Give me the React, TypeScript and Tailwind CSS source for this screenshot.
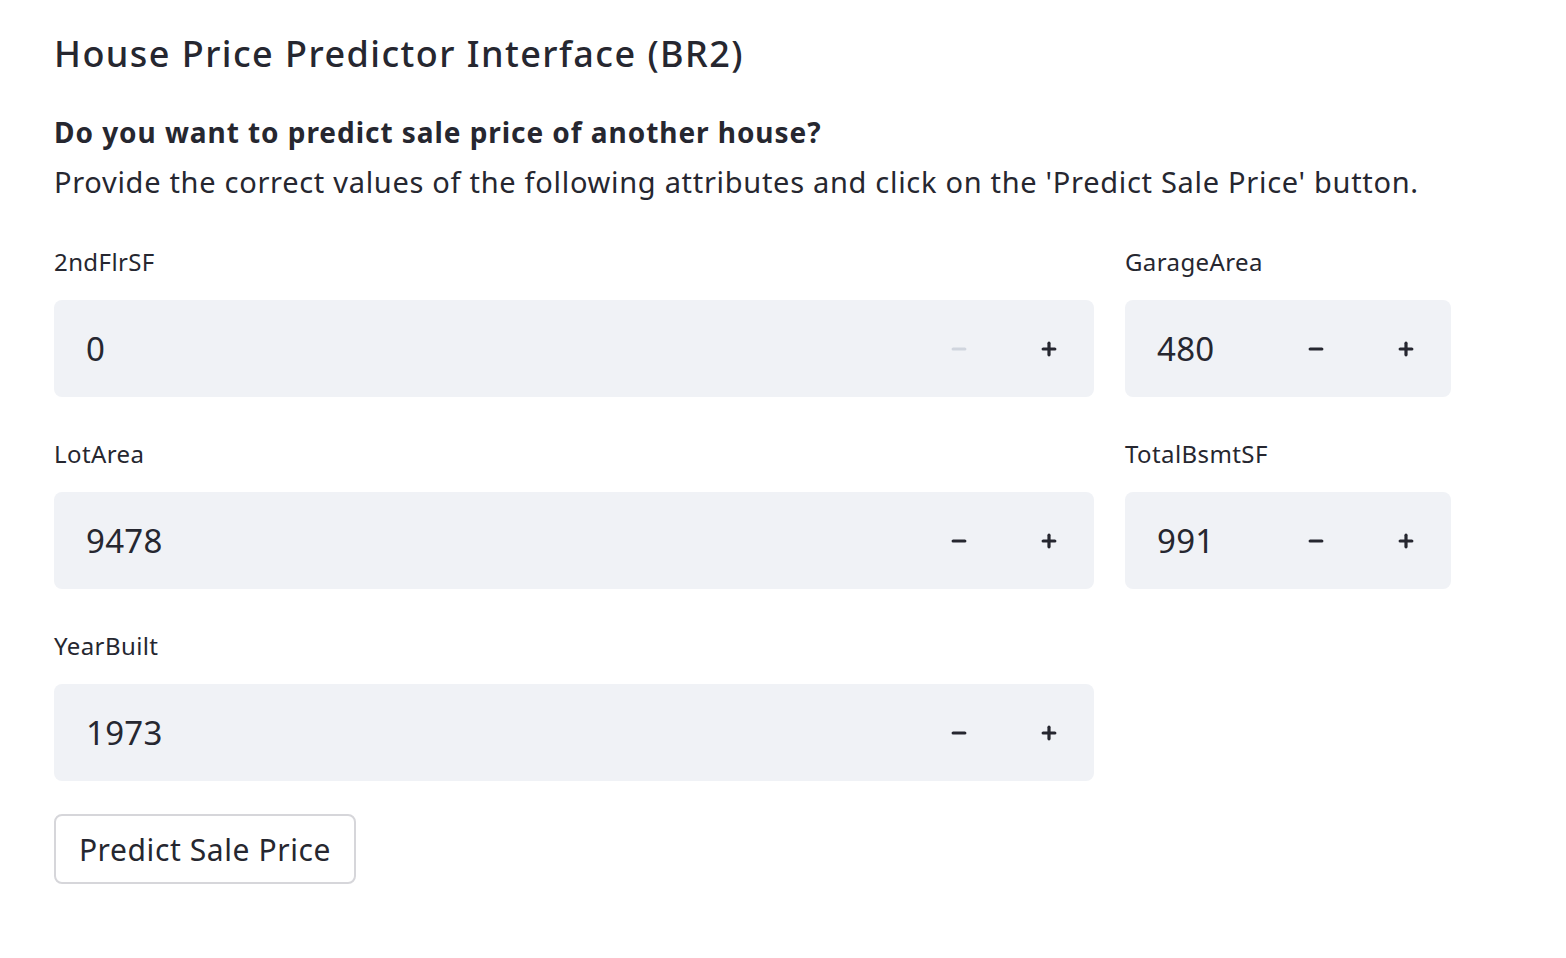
import { Minus, Plus } from "lucide-react";

type Field = { label: string; value: string; minDisabled?: boolean };

const fields: Field[] = [
  { label: "2ndFlrSF", value: "0", minDisabled: true },
  { label: "GarageArea", value: "480" },
  { label: "LotArea", value: "9478" },
  { label: "TotalBsmtSF", value: "991" },
  { label: "YearBuilt", value: "1973" },
];

const NumberInput = ({ label, value, minDisabled }: Field) => {
  return (
    <div className="flex flex-col">
      <div className="h-[30px] leading-[30px] text-[24px] tracking-[0.4px] text-[#262730]">{label}</div>
      <div className="mt-[23px] h-[97px] flex items-center bg-[#f0f2f6] rounded-[8px]">
        <div className="flex-1 pl-[32px] text-[33px] tracking-[0.3px] text-[#262730]">{value}</div>
        <button
          type="button"
          className={`w-[90px] h-full flex items-center justify-center ${
            minDisabled ? "text-[#d0d5de]" : "text-[#262730]"
          }`}
        >
          <Minus size={20} strokeWidth={3.2} absoluteStrokeWidth />
        </button>
        <button type="button" className="w-[90px] h-full flex items-center justify-center text-[#262730]">
          <Plus size={20} strokeWidth={3.2} absoluteStrokeWidth />
        </button>
      </div>
    </div>
  );
};

const App = () => {
  return (
    <div
      className="min-h-screen bg-white pl-[54px] pt-[32px] text-[#262730]"
      style={{ fontFamily: '"Noto Sans", sans-serif' }}
    >
      <h1 className="text-[36px] leading-[43px] font-medium tracking-[1.45px]">House Price Predictor Interface (BR2)</h1>
      <div className="mt-[33px]">
        <p className="text-[28px] leading-[49px] font-bold tracking-[0.95px]">
          Do you want to predict sale price of another house?
        </p>
        <p className="text-[29px] leading-[49px] tracking-[0.7px]">
          Provide the correct values of the following attributes and click on the 'Predict Sale Price' button.
        </p>
      </div>
      <div className="mt-[41px] grid grid-cols-[1040px_326px] gap-x-[31px] gap-y-[42px]">
        {fields.map((f) => (
          <NumberInput key={f.label} {...f} />
        ))}
      </div>
      <button
        type="button"
        className="mt-[33px] w-[302px] h-[70px] border-2 border-[#d6d6da] rounded-[8px] bg-white text-[30px] tracking-[0.6px] text-[#262730]"
      >
        Predict Sale Price
      </button>
    </div>
  );
};

export default App;
